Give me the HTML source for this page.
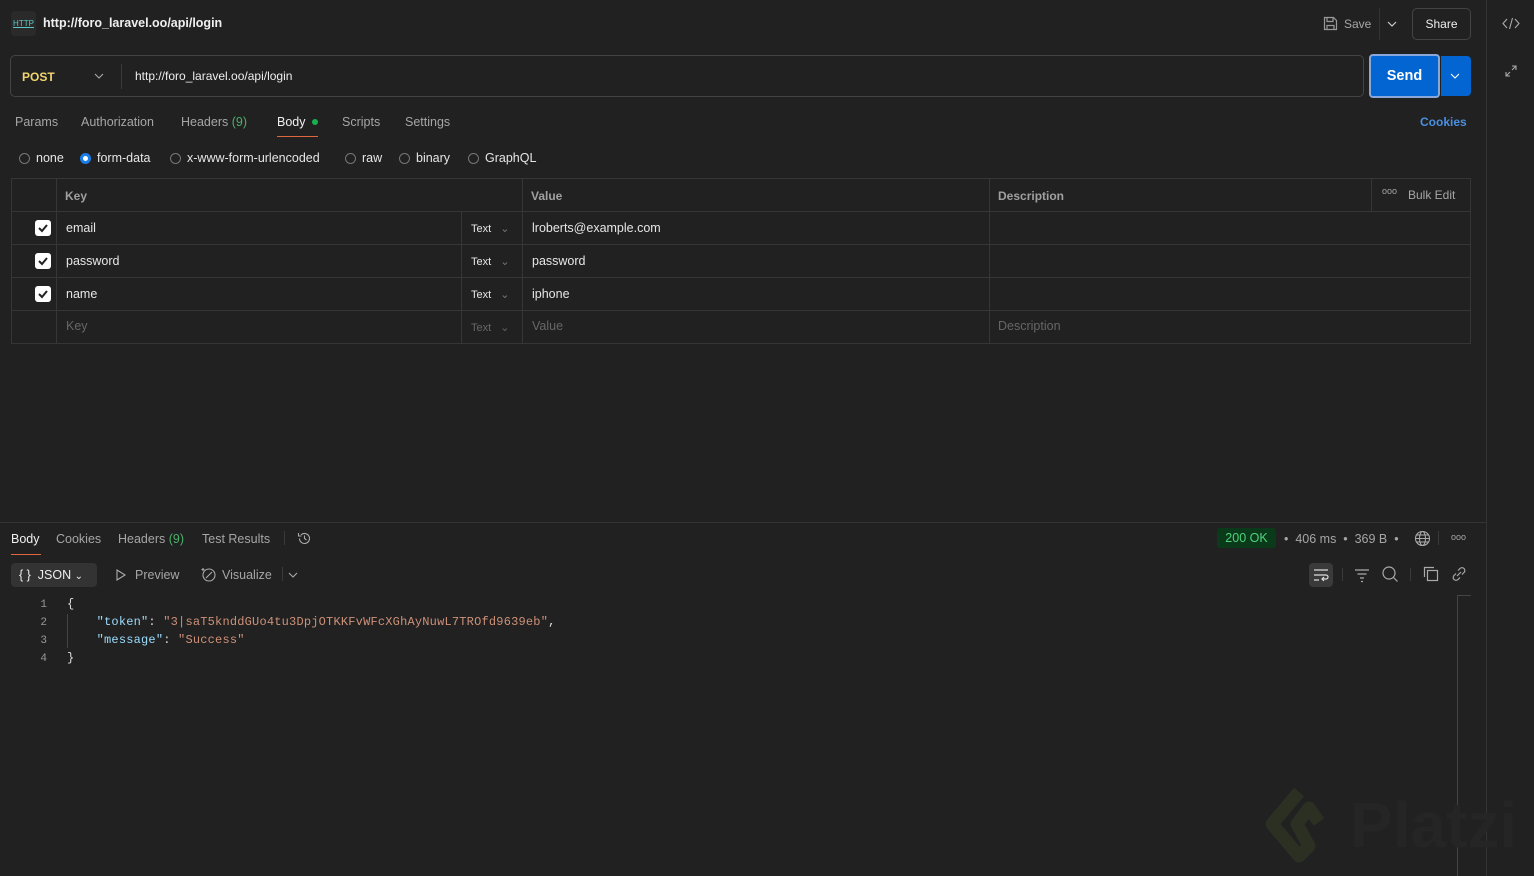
<!DOCTYPE html>
<html><head><meta charset="utf-8"><style>
*{box-sizing:border-box;margin:0;padding:0}
body{width:1534px;height:876px;background:#212121;font-family:"Liberation Sans",sans-serif;font-size:12px;color:#e6e6e6;position:relative;overflow:hidden}
.a{position:absolute}
.g{color:#a6a6a6}
.tab{position:absolute;top:115px;color:#a6a6a6;font-size:12.5px}
.row{position:absolute;left:11px;width:1460px;height:33px;border-bottom:1px solid #363636}
.cb{position:absolute;width:16px;height:16px;background:#fff;border-radius:3px}
.radio{position:absolute;top:153px;width:11px;height:11px;border:1px solid #777;border-radius:50%}
.rl{position:absolute;top:151px;font-size:12.5px}
.mono{font-family:"Liberation Mono",monospace;font-size:12px}
</style></head><body>
<div class="a" style="left:11px;top:11px;width:25px;height:25px;background:#2a2a2a;border-radius:4px;color:#5cc7c7;font-size:8px;text-align:center;line-height:25px;text-decoration:underline">HTTP</div>
<div class="a" style="left:43px;top:16px;font-size:12.5px;font-weight:bold;color:#f0f0f0">http://foro_laravel.oo/api/login</div>
<svg class="a" style="left:1323px;top:16px" width="15" height="15" viewBox="0 0 15 15" fill="none" stroke="#999" stroke-width="1.2"><path d="M1.5 1.5h9l3 3v9h-12z M4 1.5v4h6v-4 M4 13.5v-4h7v4"/></svg>
<div class="a g" style="left:1344px;top:17px">Save</div>
<div class="a" style="left:1379px;top:8px;width:1px;height:32px;background:#333"></div>
<svg class="a" style="left:1387px;top:20px" width="10" height="8"><path d="M1 2l4 4 4-4" stroke="#ccc" fill="none" stroke-width="1.2"/></svg>
<div class="a" style="left:1412px;top:8px;width:59px;height:32px;border:1px solid #444;border-radius:5px;text-align:center;line-height:30px;color:#eee">Share</div>
<div class="a" style="left:1486px;top:0;width:1px;height:876px;background:#333"></div>
<svg class="a" style="left:1502px;top:17px" width="18" height="13" fill="none" stroke="#aaa" stroke-width="1.1"><path d="M5 2L1 6.5 5 11M13 2l4 4.5-4 4.5M10.5 1l-3 11"/></svg>
<svg class="a" style="left:1504px;top:64px" width="14" height="14" fill="none" stroke="#aaa" stroke-width="1.1"><path d="M8 2h4v4M12 2l-4 4M6 12H2V8M2 12l4-4"/></svg>
<div class="a" style="left:10px;top:55px;width:1354px;height:42px;border:1px solid #444;border-radius:5px"></div>
<div class="a" style="left:22px;top:70px;color:#f2d46f;font-weight:bold">POST</div>
<svg class="a" style="left:94px;top:72px" width="10" height="8"><path d="M1 2l4 4 4-4" stroke="#aaa" fill="none" stroke-width="1.1"/></svg>
<div class="a" style="left:121px;top:64px;width:1px;height:25px;background:#3a3a3a"></div>
<div class="a" style="left:135px;top:69px;color:#eee">http://foro_laravel.oo/api/login</div>
<div class="a" style="left:1369px;top:54px;width:71px;height:44px;background:#0265d2;border:2px solid #89a8d8;border-radius:4px;color:#fff;font-weight:bold;font-size:14.5px;text-align:center;line-height:40px">Send</div>
<div class="a" style="left:1441px;top:56px;width:30px;height:40px;background:#0265d2;border-radius:0 4px 4px 0"></div>
<svg class="a" style="left:1450px;top:72px" width="10" height="8"><path d="M1 2l4 4 4-4" stroke="#fff" fill="none" stroke-width="1.1"/></svg>
<div class="tab" style="left:15px">Params</div>
<div class="tab" style="left:81px">Authorization</div>
<div class="tab" style="left:181px">Headers <span style="color:#4caf6a">(9)</span></div>
<div class="tab" style="left:277px;color:#f0f0f0">Body</div>
<div class="a" style="left:312px;top:119px;width:6px;height:6px;border-radius:50%;background:#16b14e"></div>
<div class="a" style="left:277px;top:136px;width:41px;height:1px;background:#e0663d"></div>
<div class="tab" style="left:342px">Scripts</div>
<div class="tab" style="left:405px">Settings</div>
<div class="a" style="left:1420px;top:115px;color:#4a8fe0;font-weight:bold">Cookies</div>
<div class="radio" style="left:19px"></div><div class="rl" style="left:36px">none</div>
<div class="radio" style="left:80px;border:3px solid #1a7de8;background:#fff"></div><div class="rl" style="left:97px">form-data</div>
<div class="radio" style="left:170px"></div><div class="rl" style="left:187px">x-www-form-urlencoded</div>
<div class="radio" style="left:345px"></div><div class="rl" style="left:362px">raw</div>
<div class="radio" style="left:399px"></div><div class="rl" style="left:416px">binary</div>
<div class="radio" style="left:468px"></div><div class="rl" style="left:485px">GraphQL</div>
<div class="a" style="left:11px;top:178px;width:1460px;height:166px;border:1px solid #363636"></div>
<div class="a" style="left:56px;top:178px;width:1px;height:166px;background:#363636"></div>
<div class="a" style="left:989px;top:178px;width:1px;height:166px;background:#363636"></div>
<div class="a" style="left:522px;top:178px;width:1px;height:166px;background:#363636"></div>
<div class="a" style="left:461px;top:211px;width:1px;height:133px;background:#363636"></div>
<div class="a" style="left:1371px;top:178px;width:1px;height:33px;background:#363636"></div>
<div class="row" style="top:178px;height:34px"></div>
<div class="row" style="top:211px;height:34px"></div>
<div class="row" style="top:244px;height:34px"></div>
<div class="row" style="top:277px;height:34px"></div>
<div class="a" style="left:65px;top:189px;font-weight:bold;color:#a0a0a0">Key</div>
<div class="a" style="left:531px;top:189px;font-weight:bold;color:#a0a0a0">Value</div>
<div class="a" style="left:998px;top:189px;font-weight:bold;color:#a0a0a0">Description</div>
<div class="a g" style="left:1382px;top:186px;font-size:9px">ooo</div>
<div class="a g" style="left:1408px;top:188px">Bulk Edit</div>
<div class="cb" style="left:35px;top:220px"></div><svg class="a" style="left:37px;top:222px" width="12" height="12"><path d="M2 6l3 3 5-6" stroke="#222" stroke-width="2" fill="none"/></svg>
<div class="cb" style="left:35px;top:253px"></div><svg class="a" style="left:37px;top:255px" width="12" height="12"><path d="M2 6l3 3 5-6" stroke="#222" stroke-width="2" fill="none"/></svg>
<div class="cb" style="left:35px;top:286px"></div><svg class="a" style="left:37px;top:288px" width="12" height="12"><path d="M2 6l3 3 5-6" stroke="#222" stroke-width="2" fill="none"/></svg>
<div class="a" style="left:66px;top:221px;font-size:12.5px">email</div>
<div class="a" style="left:66px;top:254px;font-size:12.5px">password</div>
<div class="a" style="left:66px;top:287px;font-size:12.5px">name</div>
<div class="a" style="left:66px;top:319px;color:#666;font-size:12.5px">Key</div>
<div class="a" style="left:471px;top:222px;font-size:11px">Text <span style="color:#777;margin-left:6px">⌄</span></div>
<div class="a" style="left:471px;top:255px;font-size:11px">Text <span style="color:#777;margin-left:6px">⌄</span></div>
<div class="a" style="left:471px;top:288px;font-size:11px">Text <span style="color:#777;margin-left:6px">⌄</span></div>
<div class="a" style="left:471px;top:321px;font-size:11px;color:#666">Text <span style="margin-left:6px">⌄</span></div>
<div class="a" style="left:532px;top:221px;font-size:12.5px">lroberts@example.com</div>
<div class="a" style="left:532px;top:254px;font-size:12.5px">password</div>
<div class="a" style="left:532px;top:287px;font-size:12.5px">iphone</div>
<div class="a" style="left:532px;top:319px;color:#666;font-size:12.5px">Value</div>
<div class="a" style="left:998px;top:319px;color:#666;font-size:12.5px">Description</div>
<div class="a" style="left:0;top:522px;width:1486px;height:1px;background:#333"></div>
<div class="a" style="left:11px;top:532px;color:#f0f0f0;font-size:12.5px">Body</div>
<div class="a" style="left:11px;top:554px;width:30px;height:1px;background:#e0663d"></div>
<div class="a g" style="left:56px;top:532px;font-size:12.5px">Cookies</div>
<div class="a g" style="left:118px;top:532px;font-size:12.5px">Headers <span style="color:#4caf6a">(9)</span></div>
<div class="a g" style="left:202px;top:532px;font-size:12.5px">Test Results</div>
<div class="a" style="left:284px;top:531px;width:1px;height:14px;background:#3a3a3a"></div>
<svg class="a" style="left:297px;top:531px" width="15" height="15" fill="none" stroke="#aaa" stroke-width="1.1"><path d="M2.5 7.5a5 5 0 1 0 1.5-3.6M1.5 2v3h3M7.5 4.5v3l2 1.5"/></svg>
<div class="a" style="left:1217px;top:528px;width:59px;height:20px;background:#0b3a1b;border-radius:3px;color:#4fd27a;text-align:center;line-height:20px;font-size:12.5px">200 OK</div>
<div class="a g" style="left:1284px;top:532px;font-size:12.5px">•&nbsp; 406 ms &nbsp;•&nbsp; 369 B &nbsp;•</div>
<svg class="a" style="left:1414px;top:530px" width="17" height="17" fill="none" stroke="#aaa" stroke-width="1.1"><circle cx="8.5" cy="8.5" r="7"/><ellipse cx="8.5" cy="8.5" rx="3" ry="7"/><path d="M1.5 8.5h14M2.5 5h12M2.5 12h12"/></svg>
<div class="a" style="left:1438px;top:531px;width:1px;height:14px;background:#3a3a3a"></div>
<div class="a g" style="left:1451px;top:532px;font-size:9px">ooo</div>
<div class="a" style="left:11px;top:563px;width:86px;height:24px;background:#333;border-radius:4px;color:#eee;line-height:24px;padding-left:8px;font-size:12.5px">{ }&nbsp; JSON <span style="font-size:10px">⌄</span></div>
<svg class="a" style="left:115px;top:568px" width="12" height="14" fill="none" stroke="#aaa" stroke-width="1.1"><path d="M2 2l8 5-8 5z"/></svg>
<div class="a g" style="left:135px;top:568px;font-size:12.5px">Preview</div>
<svg class="a" style="left:200px;top:566px" width="17" height="17" fill="none" stroke="#aaa" stroke-width="1.1"><circle cx="9" cy="9" r="6"/><path d="M6 12l6-6M3 2v3M1.5 3.5h3"/></svg>
<div class="a g" style="left:222px;top:568px;font-size:12.5px">Visualize</div>
<div class="a" style="left:282px;top:567px;width:1px;height:14px;background:#3a3a3a"></div>
<svg class="a" style="left:288px;top:571px" width="10" height="8"><path d="M1 2l4 4 4-4" stroke="#aaa" fill="none" stroke-width="1.1"/></svg>
<div class="a" style="left:1309px;top:563px;width:24px;height:24px;background:#3a3a3a;border-radius:4px"></div>
<svg class="a" style="left:1313px;top:567px" width="16" height="16" fill="none" stroke="#ddd" stroke-width="1.2"><path d="M1 3h14M1 8h12a2 2 0 0 1 0 4H9M11 10l-2 2 2 2M1 13h5"/></svg>
<div class="a" style="left:1342px;top:568px;width:1px;height:13px;background:#3a3a3a"></div>
<svg class="a" style="left:1354px;top:567px" width="16" height="16" fill="none" stroke="#aaa" stroke-width="1.2"><path d="M1 3h14M3.5 7h9M6 11h4M7 14.5h2"/></svg>
<svg class="a" style="left:1382px;top:566px" width="17" height="17" fill="none" stroke="#aaa" stroke-width="1.2"><circle cx="7" cy="7" r="6"/><path d="M11.5 11.5l4 4"/></svg>
<div class="a" style="left:1410px;top:568px;width:1px;height:13px;background:#3a3a3a"></div>
<svg class="a" style="left:1423px;top:566px" width="16" height="16" fill="none" stroke="#aaa" stroke-width="1.2"><path d="M1.5 11V1.5H11"/><rect x="4.5" y="4.5" width="10" height="10"/></svg>
<svg class="a" style="left:1451px;top:566px" width="16" height="16" fill="none" stroke="#aaa" stroke-width="1.2"><path d="M6 10l4-4M7 4.5l2-2a2.8 2.8 0 0 1 4 4l-2 2M9 11.5l-2 2a2.8 2.8 0 0 1-4-4l2-2"/></svg>
<div class="a mono" style="left:30px;top:596px;color:#999;line-height:18px;text-align:right;width:17px;font-size:11px">1<br>2<br>3<br>4</div>
<div class="a mono" style="left:67px;top:595px;line-height:18px;color:#ddd;white-space:pre;letter-spacing:0.2px">{
    <span style="color:#9cdcfe">"token"</span>: <span style="color:#ce9178">"3|saT5knddGUo4tu3DpjOTKKFvWFcXGhAyNuwL7TROfd9639eb"</span>,
    <span style="color:#9cdcfe">"message"</span>: <span style="color:#ce9178">"Success"</span>
}</div>
<div class="a" style="left:67px;top:614px;width:1px;height:34px;background:#444"></div>
<div class="a" style="left:1457px;top:595px;width:1px;height:281px;background:#444"></div>
<div class="a" style="left:1457px;top:595px;width:14px;height:1px;background:#444"></div>
<svg class="a" style="left:1262px;top:782px" width="75" height="85"><path d="M37 10L10 42l27 32 10-10-12-22 12-16 10 14" stroke="#2c3022" stroke-width="13" fill="none" stroke-linejoin="round"/></svg>
<div class="a" style="left:1350px;top:788px;font-size:64px;color:#252525;font-weight:bold">Platzi</div>
</body></html>
